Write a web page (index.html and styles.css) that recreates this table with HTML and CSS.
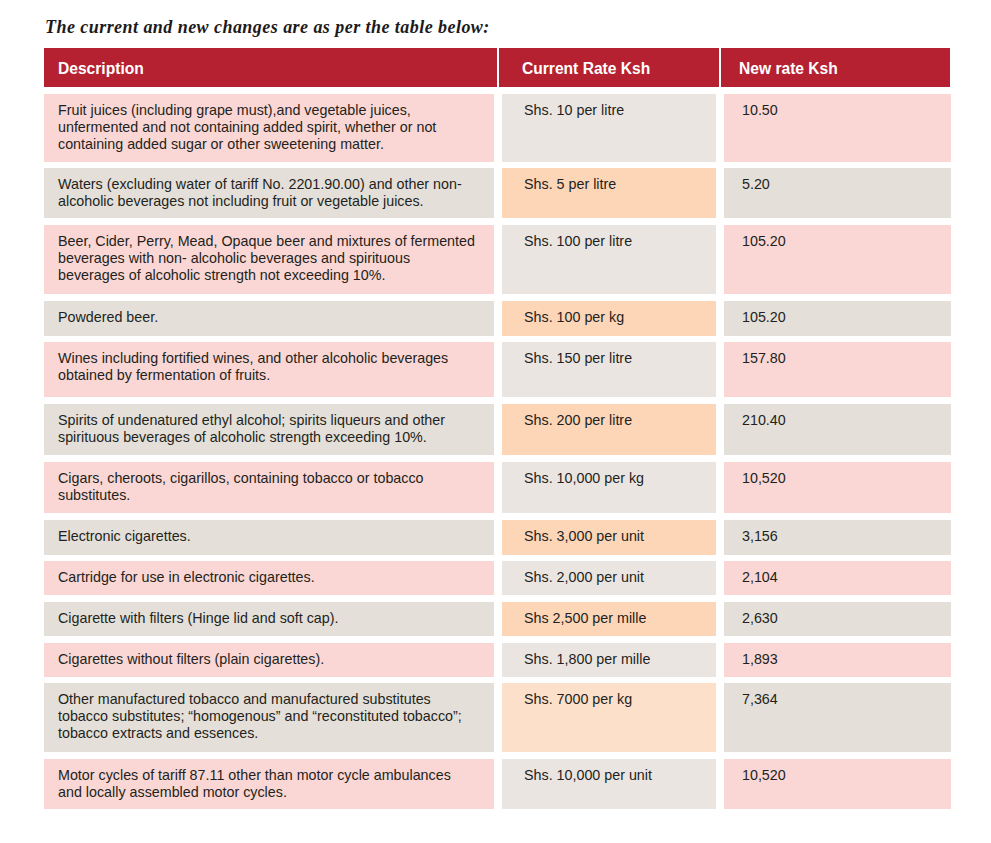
FILE: index.html
```html
<!DOCTYPE html>
<html lang="en">
<head>
<meta charset="utf-8">
<title>Rates table</title>
<link rel="stylesheet" href="styles.css">
</head>
<body>
<div class="page">
  <h1 class="title">The current and new changes are as per the table below:</h1>
  <div class="rates">
    <div class="hd hd-desc">Description</div>
    <div class="hd hd-cur">Current Rate Ksh</div>
    <div class="hd hd-new">New rate Ksh</div>

    <div class="c desc pink">Fruit juices (including grape must),and vegetable juices, unfermented and not containing added spirit, whether or not containing added sugar or other sweetening matter.</div>
    <div class="c cur lgrey">Shs. 10 per litre</div>
    <div class="c new pink">10.50</div>

    <div class="c desc grey">Waters (excluding water of tariff No. 2201.90.00) and other non-alcoholic beverages not including fruit or vegetable juices.</div>
    <div class="c cur peach">Shs. 5 per litre</div>
    <div class="c new grey">5.20</div>

    <div class="c desc pink">Beer, Cider, Perry, Mead, Opaque beer and mixtures of fermented beverages with non- alcoholic beverages and spirituous beverages of alcoholic strength not exceeding 10%.</div>
    <div class="c cur lgrey">Shs. 100 per litre</div>
    <div class="c new pink">105.20</div>

    <div class="c desc grey">Powdered beer.</div>
    <div class="c cur peach">Shs. 100 per kg</div>
    <div class="c new grey">105.20</div>

    <div class="c desc pink">Wines including fortified wines, and other alcoholic beverages obtained by fermentation of fruits.</div>
    <div class="c cur lgrey">Shs. 150 per litre</div>
    <div class="c new pink">157.80</div>

    <div class="c desc grey">Spirits of undenatured ethyl alcohol; spirits liqueurs and other spirituous beverages of alcoholic strength exceeding 10%.</div>
    <div class="c cur peach">Shs. 200 per litre</div>
    <div class="c new grey">210.40</div>

    <div class="c desc pink">Cigars, cheroots, cigarillos, containing tobacco or tobacco substitutes.</div>
    <div class="c cur lgrey">Shs. 10,000 per kg</div>
    <div class="c new pink">10,520</div>

    <div class="c desc grey">Electronic cigarettes.</div>
    <div class="c cur peach">Shs. 3,000 per unit</div>
    <div class="c new grey">3,156</div>

    <div class="c desc pink">Cartridge for use in electronic cigarettes.</div>
    <div class="c cur lgrey">Shs. 2,000 per unit</div>
    <div class="c new pink">2,104</div>

    <div class="c desc grey">Cigarette with filters (Hinge lid and soft cap).</div>
    <div class="c cur peach">Shs 2,500 per mille</div>
    <div class="c new grey">2,630</div>

    <div class="c desc pink">Cigarettes without filters (plain cigarettes).</div>
    <div class="c cur lgrey">Shs. 1,800 per mille</div>
    <div class="c new pink">1,893</div>

    <div class="c desc grey">Other manufactured tobacco and manufactured substitutes tobacco substitutes; “homogenous” and “reconstituted tobacco”; tobacco extracts and essences.</div>
    <div class="c cur lpeach">Shs. 7000 per kg</div>
    <div class="c new grey">7,364</div>

    <div class="c desc pink">Motor cycles of tariff 87.11 other than motor cycle ambulances and locally assembled motor cycles.</div>
    <div class="c cur lgrey">Shs. 10,000 per unit</div>
    <div class="c new pink">10,520</div>
  </div>
</div>
</body>
</html>
```

FILE: styles.css
```css
html, body {
  margin: 0;
  padding: 0;
  background: #ffffff;
}

.page {
  padding: 16px 0 0 44px;
}

.title {
  margin: 0 0 10px 1px;
  font-family: "Liberation Serif", "Times New Roman", serif;
  font-style: italic;
  font-weight: bold;
  font-size: 18px;
  line-height: 22px;
  color: #1d1a1b;
  letter-spacing: 0.45px;
}

.rates {
  display: grid;
  width: 906px;
  grid-template-columns: 453px 220px 229px;
  grid-template-rows: 39px 68px 50px 69px 35px 55px 51px 51px 35px 34px 34px 34px 69px 50px;
  column-gap: 2px;
  row-gap: 6.7px;
}

.hd {
  display: flex;
  align-items: center;
  padding-top: 3px;
  box-sizing: border-box;
  background: #b62132;
  color: #ffffff;
  font-family: "Liberation Sans", Arial, sans-serif;
  font-weight: bold;
  font-size: 15.6px;
}

.hd-desc { padding-left: 14px; }
.hd-cur { padding-left: 23px; }
.hd-new { padding-left: 18px; }

.c {
  font-family: "Liberation Sans", Arial, sans-serif;
  font-size: 14.3px;
  line-height: 17px;
  color: #231f20;
  padding-top: 8px;
  box-sizing: border-box;
}

.desc {
  margin-right: 3px;
  padding-left: 14px;
  padding-right: 18px;
}

.cur {
  margin: 0 3px;
  padding-left: 22px;
}

.new {
  margin: 0 -1px 0 3px;
  padding-left: 18px;
}

.pink { background: #fad7d4; }
.grey { background: #e4dfd9; }
.lgrey { background: #ebe5e1; }
.peach { background: #fdd5b7; }
.lpeach { background: #fde0c9; }
```
